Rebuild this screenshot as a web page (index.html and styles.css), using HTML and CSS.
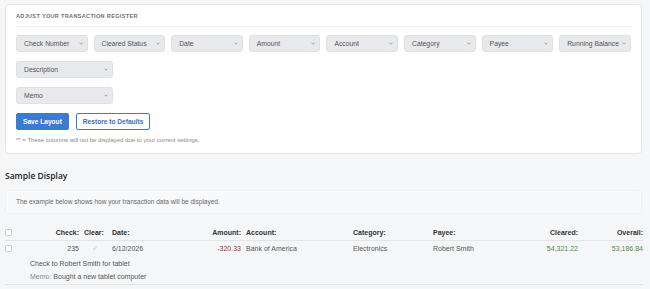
FILE: index.html
```html
<!DOCTYPE html>
<html lang="en">
<head>
  <meta charset="UTF-8">
  <meta name="viewport" content="width=device-width, initial-scale=1.0">
  <title>Transaction Register Layout</title>
  <link rel="stylesheet" href="styles.css">
</head>
<body>

  <div class="page">

    <div class="card">
      <div class="card-title">Adjust your transaction register</div>

      <div class="picks">
        <div class="pick">Check Number <span class="chev"><svg width="4" height="3" viewBox="0 0 4 3"><path d="M0.5 0.7 L2 2.2 L3.5 0.7" fill="none" stroke="#888" stroke-width="0.7"/></svg></span></div>
        <div class="pick">Cleared Status <span class="chev"><svg width="4" height="3" viewBox="0 0 4 3"><path d="M0.5 0.7 L2 2.2 L3.5 0.7" fill="none" stroke="#888" stroke-width="0.7"/></svg></span></div>
        <div class="pick">Date <span class="chev"><svg width="4" height="3" viewBox="0 0 4 3"><path d="M0.5 0.7 L2 2.2 L3.5 0.7" fill="none" stroke="#888" stroke-width="0.7"/></svg></span></div>
        <div class="pick">Amount <span class="chev"><svg width="4" height="3" viewBox="0 0 4 3"><path d="M0.5 0.7 L2 2.2 L3.5 0.7" fill="none" stroke="#888" stroke-width="0.7"/></svg></span></div>
        <div class="pick">Account <span class="chev"><svg width="4" height="3" viewBox="0 0 4 3"><path d="M0.5 0.7 L2 2.2 L3.5 0.7" fill="none" stroke="#888" stroke-width="0.7"/></svg></span></div>
        <div class="pick">Category <span class="chev"><svg width="4" height="3" viewBox="0 0 4 3"><path d="M0.5 0.7 L2 2.2 L3.5 0.7" fill="none" stroke="#888" stroke-width="0.7"/></svg></span></div>
        <div class="pick">Payee <span class="chev"><svg width="4" height="3" viewBox="0 0 4 3"><path d="M0.5 0.7 L2 2.2 L3.5 0.7" fill="none" stroke="#888" stroke-width="0.7"/></svg></span></div>
        <div class="pick">Running Balance <span class="chev"><svg width="4" height="3" viewBox="0 0 4 3"><path d="M0.5 0.7 L2 2.2 L3.5 0.7" fill="none" stroke="#888" stroke-width="0.7"/></svg></span></div>
      </div>

      <div class="pick wide">Description <span class="chev"><svg width="4" height="3" viewBox="0 0 4 3"><path d="M0.5 0.7 L2 2.2 L3.5 0.7" fill="none" stroke="#888" stroke-width="0.7"/></svg></span></div>
      <div class="pick wide">Memo <span class="chev"><svg width="4" height="3" viewBox="0 0 4 3"><path d="M0.5 0.7 L2 2.2 L3.5 0.7" fill="none" stroke="#888" stroke-width="0.7"/></svg></span></div>

      <div class="buttons">
        <button class="btn btn-save">Save Layout</button>
        <button class="btn btn-restore">Restore to Defaults</button>
      </div>
      <div class="note">** = These columns will not be displayed due to your current settings.</div>
    </div>

    <h2 class="section-title">Sample Display</h2>
    <div class="info">The example below shows how your transaction data will be displayed.</div>

    <div class="register">
      <div class="reg-row reg-head">
        <span class="box"></span>
        <span class="num">Check:</span>
        <span>Clear:</span>
        <span>Date:</span>
        <span class="num">Amount:</span>
        <span>Account:</span>
        <span>Category:</span>
        <span>Payee:</span>
        <span class="num">Cleared:</span>
        <span class="num">Overall:</span>
      </div>
      <div class="reg-item">
        <div class="reg-row">
          <span class="box"></span>
          <span class="num">235</span>
          <span class="tick">&#10003;</span>
          <span>6/12/2026</span>
          <span class="num neg">-320.33</span>
          <span>Bank of America</span>
          <span>Electronics</span>
          <span>Robert Smith</span>
          <span class="num pos">54,321.22</span>
          <span class="num pos">53,186.84</span>
        </div>
        <div class="reg-desc first">Check to Robert Smith for tablet</div>
        <div class="reg-desc"><span class="memo-label">Memo:</span> Bought a new tablet computer</div>
      </div>
    </div>

  </div>

</body>
</html>
```

FILE: styles.css
```css
body {
  margin: 0;
  background-color: #f5f6f8;
  font-family: "Liberation Sans", Arial, sans-serif;
  color: #444;
}
.page {
  padding: 4px 8px 0 5px;
}
.card {
  background-color: #fff;
  border: 1px solid #e4e6ea;
  border-radius: 4px;
  padding: 7px 10px 10px 10px;
}
.card-title {
  font-size: 5.5px;
  font-weight: bold;
  letter-spacing: 0.35px;
  text-transform: uppercase;
  color: #707070;
  line-height: 8px;
  padding-bottom: 6px;
  border-bottom: 1px solid #eceef1;
}
.picks {
  display: grid;
  grid-template-columns: repeat(8, 1fr);
  gap: 6px;
  margin-top: 8px;
}
.pick {
  display: flex;
  align-items: center;
  justify-content: space-between;
  height: 17px;
  box-sizing: border-box;
  padding: 0 4px 0 7px;
  background-color: #e8e9ed;
  border: 1px solid #dfe0e4;
  border-radius: 3px;
  font-size: 6.8px;
  color: #555;
  white-space: nowrap;
}
.pick.wide {
  width: 97px;
  margin-top: 9px;
}
.chev {
  display: flex;
  margin-left: 3px;
}
.buttons {
  display: flex;
  gap: 7px;
  margin-top: 9px;
}
.btn {
  height: 17px;
  padding: 0 6px;
  border-radius: 2px;
  font-family: "Liberation Sans", Arial, sans-serif;
  font-size: 6.6px;
  font-weight: bold;
}
.btn-save {
  background-color: #3b7bd0;
  border: 1px solid #3b7bd0;
  color: #fff;
}
.btn-restore {
  background-color: #fff;
  border: 1px solid #3b7bd0;
  color: #3a6fc0;
}
.note {
  font-size: 6px;
  color: #888;
  margin-top: 7px;
}
.section-title {
  font-family: "Open Sans", sans-serif;
  font-size: 8.5px;
  font-weight: 600;
  color: #222;
  margin: 16px 0 9px 0;
}
.info {
  background-color: #f8f9fa;
  border: 1px solid #eef0f2;
  border-radius: 3px;
  padding: 0 10px;
  height: 22px;
  line-height: 22px;
  font-size: 6.5px;
  color: #666;
}
.register {
  margin-top: 11px;
  width: 638px;
  font-size: 7px;
}
.reg-row {
  display: grid;
  grid-template-columns: 8px 61px 23px 68px 56px 102px 75px 80px 60px 60px;
  column-gap: 5px;
  align-items: center;
  height: 15px;
}
.reg-head {
  font-weight: bold;
  color: #333;
  border-bottom: 1px solid #e2e4e7;
}
.reg-item {
  border-bottom: 1px solid #e2e4e7;
  color: #555;
  padding-bottom: 1px;
}
.num {
  text-align: right;
}
.box {
  width: 7px;
  height: 7px;
  background-color: #fff;
  border: 1px solid #c8cacd;
  border-radius: 1.5px;
  box-sizing: border-box;
}
.tick {
  color: #b9dcb0;
  text-align: center;
  font-size: 7.5px;
}
.neg {
  color: #8e3b3b;
}
.pos {
  color: #4f8f45;
}
.reg-desc {
  padding-left: 25px;
  height: 13px;
  line-height: 13px;
}
.reg-desc.first {
  margin-top: 1px;
}
.memo-label {
  color: #888;
}
```
